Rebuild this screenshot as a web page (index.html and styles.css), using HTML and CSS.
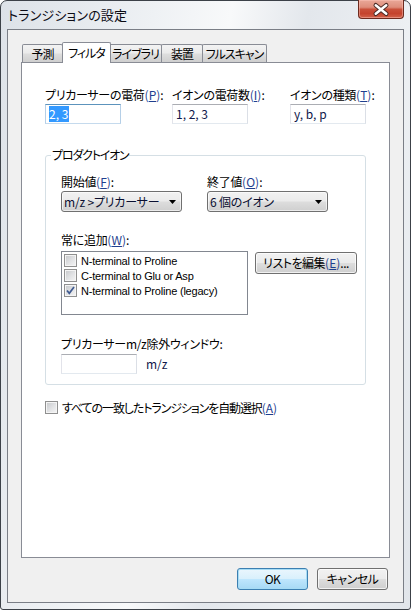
FILE: index.html
```html
<!DOCTYPE html>
<html lang="ja">
<head>
<meta charset="utf-8">
<title>トランジションの設定</title>
<link rel="stylesheet" href="styles.css">
</head>
<body>
<div class="window">
  <div class="titlebar">
    <span class="title">トランジションの設定</span>
    <div class="close">
      <svg width="46" height="19" viewBox="0 0 46 19">
        <path d="M17.5 5 L28.5 14 M28.5 5 L17.5 14" stroke="#4a2a26" stroke-width="4.6" stroke-linecap="round" fill="none"/>
        <path d="M17.5 5 L28.5 14 M28.5 5 L17.5 14" stroke="#ffffff" stroke-width="2.6" stroke-linecap="round" fill="none"/>
      </svg>
    </div>
  </div>
  <div class="client">
    <div class="tabs">
      <div class="tab t1">予測</div>
      <div class="tab active t2">フィルタ</div>
      <div class="tab t3">ライブラリ</div>
      <div class="tab t4">装置</div>
      <div class="tab t5">フルスキャン</div>
    </div>
    <div class="panel">
      <div class="charges">
        <div class="field">
          <div class="label">プリカーサーの電荷<span class="acc">(<u>P</u>)</span>:</div>
          <div class="textbox focus"><span class="sel">2, 3</span></div>
        </div>
        <div class="field">
          <div class="label">イオンの電荷数<span class="acc">(<u>I</u>)</span>:</div>
          <div class="textbox">1, 2, 3</div>
        </div>
        <div class="field">
          <div class="label">イオンの種類<span class="acc">(<u>T</u>)</span>:</div>
          <div class="textbox">y, b, p</div>
        </div>
      </div>

      <fieldset class="group">
        <legend>プロダクトイオン</legend>
        <div class="group-body">
          <div class="range">
            <div class="field col1">
              <div class="label">開始値<span class="acc">(<u>F</u>)</span>:</div>
              <div class="combo"><span>m/z &gt;プリカーサー</span>
                <svg class="arrow" width="7" height="4" viewBox="0 0 7 4"><polygon points="0,0 7,0 3.5,4" fill="#000"/></svg>
              </div>
            </div>
            <div class="field">
              <div class="label">終了値<span class="acc">(<u>O</u>)</span>:</div>
              <div class="combo"><span>6 個のイオン</span>
                <svg class="arrow" width="7" height="4" viewBox="0 0 7 4"><polygon points="0,0 7,0 3.5,4" fill="#000"/></svg>
              </div>
            </div>
          </div>

          <div class="label add-label">常に追加<span class="acc">(<u>W</u>)</span>:</div>
          <div class="add-row">
            <div class="listbox">
              <div class="item"><span class="cb"></span><span class="item-text">N-terminal to Proline</span></div>
              <div class="item"><span class="cb"></span><span class="item-text">C-terminal to Glu or Asp</span></div>
              <div class="item"><span class="cb checked"><svg width="11" height="11" viewBox="0 0 11 11"><path d="M2 5.5 L4.3 8.3 L9 2" stroke="#3f5a90" stroke-width="1.7" fill="none"/></svg></span><span class="item-text">N-terminal to Proline (legacy)</span></div>
            </div>
            <div class="btn edit">リストを編集<span class="acc">(<u>E</u>)</span>...</div>
          </div>

          <div class="label excl-label">プリカーサーm/z除外ウィンドウ:</div>
          <div class="excl-row">
            <div class="textbox small"></div>
            <span class="unit">m/z</span>
          </div>
        </div>
      </fieldset>

      <div class="auto-row">
        <span class="cb"></span>
        <span class="auto-text">すべての一致したトランジションを自動選択<span class="acc">(<u>A</u>)</span></span>
      </div>
    </div>
    <div class="footer">
      <div class="btn default">OK</div>
      <div class="btn">キャンセル</div>
    </div>
  </div>
</div>
</body>
</html>
```

FILE: styles.css
```css
* { box-sizing: border-box; }

html, body {
  margin: 0;
  padding: 0;
  background: #ffffff;
}

body {
  width: 411px;
  height: 610px;
  font-family: "Noto Sans CJK JP", "Liberation Sans", sans-serif;
  font-size: 12px;
  color: #000;
  font-feature-settings: "palt";
}

.window {
  width: 411px;
  height: 610px;
  border: 1px solid #3c4148;
  border-radius: 7px 7px 3px 3px;
  padding: 0 6px 6px 6px;
  display: flex;
  flex-direction: column;
  background: linear-gradient(100deg, #dde2e8 0%, #eef1f4 30%, #f8f9fa 45%, #e3e7ec 60%, #edf0f3 80%, #e1e5ea 100%);
}

.titlebar {
  height: 28px;
  display: flex;
  align-items: center;
  justify-content: space-between;
  padding-left: 1px;
}

.title {
  font-size: 13px;
  line-height: 16px;
  color: #0b0b14;
  letter-spacing: 0.2px;
}

.close {
  align-self: flex-start;
  margin-top: -1px;
  width: 46px;
  height: 19px;
  border: 1px solid #6d2a1e;
  border-top: none;
  border-radius: 0 0 4px 4px;
  background: linear-gradient(#e9a898 0%, #de8d7b 40%, #c9503a 52%, #c5432d 75%, #d2634b 100%);
  box-shadow: inset 0 0 0 1px rgba(255, 200, 190, 0.45);
  display: flex;
}

.client {
  flex: 1;
  border: 1px solid #7a7e86;
  background: #f0f0f0;
  padding: 0 13px;
  display: flex;
  flex-direction: column;
}

/* ---- tabs ---- */
.tabs {
  margin-top: 12px;
  display: flex;
  align-items: flex-end;
  padding-left: 1px;
}

.tab {
  height: 18px;
  line-height: 17px;
  border: 1px solid #898c95;
  border-bottom: none;
  border-radius: 2px 2px 0 0;
  background: linear-gradient(#f3f3f3 0%, #ebebeb 45%, #dddddd 55%, #cfcfcf 100%);
  text-align: center;
  margin-left: -1px;
  white-space: nowrap;
  letter-spacing: -1px;
  display: flex;
  justify-content: center;
}

.tab:first-child { margin-left: 0; }

.tab.active {
  height: 21px;
  line-height: 20px;
  margin-bottom: -1px;
  background: #ffffff;
  position: relative;
  z-index: 1;
  margin-left: -1px;
  margin-right: -1px;
}

.t1 { width: 41px; }
.t2 { width: 49px; }
.t3 { width: 53px; }
.t4 { width: 42px; }
.t5 { width: 65px; }

.panel {
  flex: 1;
  border: 1px solid #898c95;
  background: #ffffff;
  padding: 24px 0 0 23px;
}

.label {
  line-height: 15px;
  height: 15px;
  white-space: nowrap;
  letter-spacing: -0.3px;
}

.acc { color: #1f3f8f; letter-spacing: 0; }
.acc u { text-decoration-thickness: 1px; text-underline-offset: 1px; }

/* ---- charges ---- */
.charges {
  display: grid;
  grid-template-columns: 127px 118px auto;
}

.textbox {
  margin-top: 2px;
  width: 76px;
  height: 20px;
  border: 1px solid #abadb3;
  border-left-color: #e2e3ea;
  border-right-color: #dbdfe6;
  border-bottom-color: #e3e9ef;
  background: #fff;
  padding: 1px 0 0 3px;
  line-height: 16px;
  color: #10184a;
  font-size: 12px;
}

.textbox.focus {
  border-color: #5c93bc #b5cfe7 #c5daed #b5cfe7;
}

.sel {
  display: inline-block;
  background: #3399ff;
  color: #fff;
  padding: 0 1px 0 0;
  line-height: 16px;
}

/* ---- group ---- */
.group {
  margin: 24px 0 0 0;
  padding: 0;
  width: 321px;
  border: 1px solid #d5dfe5;
  border-radius: 3px;
  min-width: 0;
}

.group legend {
  margin-left: 5px;
  padding: 0 1px;
  line-height: 14px;
  height: 14px;
  letter-spacing: -1.2px;
}

.group-body {
  padding: 12px 0 10px 15px;
}

.range {
  display: flex;
}

.col1 { width: 146px; }

.combo {
  margin-top: 2px;
  width: 121px;
  height: 21px;
  border: 1px solid #707070;
  border-radius: 3px;
  background: linear-gradient(#f2f2f2 0%, #ebebeb 48%, #dddddd 52%, #cfcfcf 100%);
  box-shadow: inset 0 0 0 1px rgba(255, 255, 255, 0.6);
  display: flex;
  align-items: center;
  justify-content: space-between;
  padding: 0 5px 0 2px;
  line-height: 16px;
  color: #0a0f30;
  letter-spacing: -0.2px;
  white-space: pre;
}

.arrow { display: block; margin-top: 1px; }

.add-label { margin-top: 20px; }

.add-row {
  margin-top: 4px;
  display: flex;
  gap: 7px;
  align-items: flex-start;
}

.listbox {
  width: 187px;
  height: 64px;
  border: 1px solid #828790;
  background: #fff;
  padding: 1px 0 0 2px;
}

.item {
  height: 15px;
  display: flex;
  align-items: center;
  gap: 4px;
}

.item-text {
  font-family: "Liberation Sans", "Noto Sans CJK JP", sans-serif;
  font-size: 11px;
  letter-spacing: -0.2px;
  line-height: 14px;
  color: #000;
}

.cb {
  flex: none;
  width: 13px;
  height: 13px;
  border: 1px solid #8f8f8f;
  background: linear-gradient(135deg, #c4c6c9 0%, #e2e3e5 55%, #f5f5f5 100%);
  box-shadow: inset 0 0 0 1px #f4f4f4;
  display: flex;
  align-items: center;
  justify-content: center;
}

.cb svg { display: block; }

.btn {
  height: 22px;
  border: 1px solid #707070;
  border-radius: 3px;
  background: linear-gradient(#f2f2f2 0%, #ebebeb 48%, #dddddd 52%, #cfcfcf 100%);
  box-shadow: inset 0 0 0 1px rgba(255, 255, 255, 0.7);
  display: flex;
  align-items: center;
  justify-content: center;
  line-height: 16px;
  white-space: nowrap;
}

.edit {
  margin-top: 1px;
  width: 102px;
  letter-spacing: -0.5px;
}

.excl-label { margin-top: 21px; }

.excl-row {
  display: flex;
  align-items: center;
  gap: 9px;
  margin-top: 1px;
}

.textbox.small {
  margin-top: 2px;
  width: 76px;
  height: 20px;
}

.unit {
  color: #10184a;
  line-height: 15px;
  margin-top: 1px;
}

.auto-row {
  margin-top: 15px;
  display: flex;
  align-items: center;
  gap: 4px;
  height: 14px;
}

.auto-text { line-height: 15px; letter-spacing: -1.1px; }

/* ---- footer ---- */
.footer {
  display: flex;
  justify-content: flex-end;
  gap: 9px;
  padding: 10px 2px 12px 0;
}

.footer .btn { width: 71px; letter-spacing: -0.5px; }

.btn.default {
  border-color: #3c7fb1;
  box-shadow: inset 0 0 0 1px #a6dcf5;
  background: linear-gradient(#eaf6fd 0%, #d9f0fc 48%, #bee6fd 52%, #a7d9f5 100%);
}
```
